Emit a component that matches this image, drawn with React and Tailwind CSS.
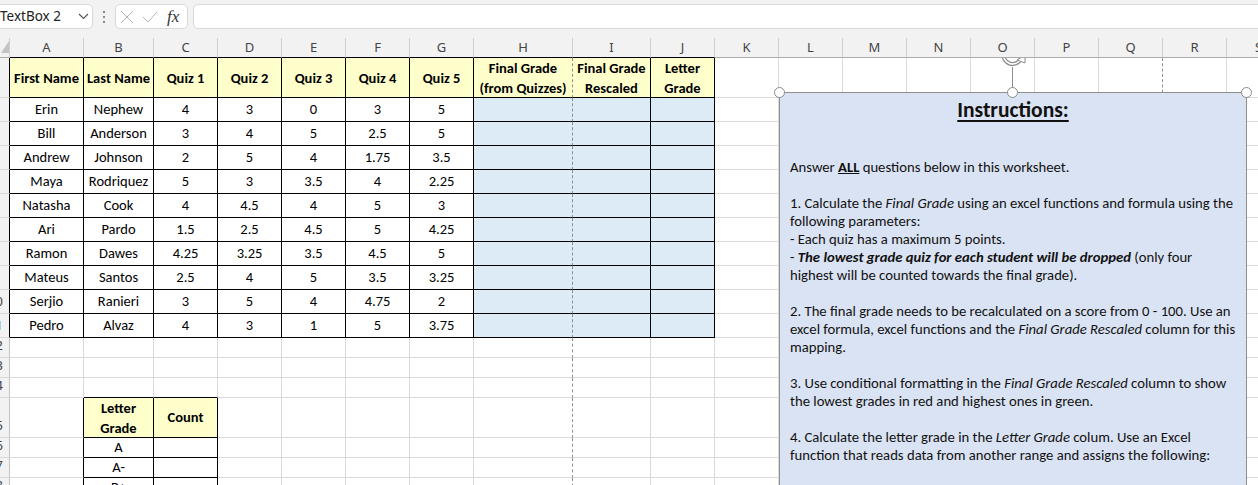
import React from 'react';

const COLS = ['A','B','C','D','E','F','G','H','I','J','K','L','M','N','O','P','Q','R','S'];

const DATA = [
  ['Erin','Nephew','4','3','0','3','5'],
  ['Bill','Anderson','3','4','5','2.5','5'],
  ['Andrew','Johnson','2','5','4','1.75','3.5'],
  ['Maya','Rodriquez','5','3','3.5','4','2.25'],
  ['Natasha','Cook','4','4.5','4','5','3'],
  ['Ari','Pardo','1.5','2.5','4.5','5','4.25'],
  ['Ramon','Dawes','4.25','3.25','3.5','4.5','5'],
  ['Mateus','Santos','2.5','4','5','3.5','3.25'],
  ['Serjio','Ranieri','3','5','4','4.75','2'],
  ['Pedro','Alvaz','4','3','1','5','3.75'],
];

const HEAD = [
  ['First Name'], ['Last Name'], ['Quiz 1'], ['Quiz 2'], ['Quiz 3'], ['Quiz 4'], ['Quiz 5'],
  ['Final Grade', '(from Quizzes)'], ['Final Grade', 'Rescaled'], ['Letter', 'Grade'],
];

const inT = (r, c) => (r >= 1 && r <= 11 && c >= 1 && c <= 10) || (r >= 15 && c >= 2 && c <= 3);

function rightCls(r, c) {
  if ((c === 8 || c === 17) && r >= 1) return 'border-r-[#8f8f8f] [border-right-style:dashed]';
  if (inT(r, c) || inT(r, c + 1)) return 'border-r-black';
  if (r === 0) return 'border-r-[#cfcfcf]';
  if (c === 0) return 'border-r-[#c4c4c4]';
  return 'border-r-[#dadada]';
}
function bottomCls(r, c) {
  if (inT(r, c) || inT(r + 1, c)) return 'border-b-black';
  if (r === 0) return 'border-b-[#ababab]';
  return 'border-b-[#dadada]';
}
function bgCls(r, c) {
  if (r === 0 || c === 0) return 'bg-[#f2f2f2]';
  if (r === 1 && c >= 1 && c <= 10) return 'bg-[#ffffcc]';
  if (r >= 2 && r <= 11 && c >= 8 && c <= 10) return 'bg-[#ddebf7]';
  if (r === 15 && (c === 2 || c === 3)) return 'bg-[#ffffcc]';
  return 'bg-white';
}

function content(r, c) {
  if (r === 0) {
    if (c === 0) {
      return (
        <svg width="10" height="20" className="block">
          <polygon points="1,18 9,18 9,6" fill="#c3c3c3" />
        </svg>
      );
    }
    return <span className="text-[13px] text-[#444] font-['Noto_Sans',sans-serif]">{COLS[c - 1]}</span>;
  }
  if (c === 0) {
    if (r >= 10) {
      return <span className="text-[13px] text-[#444] font-['Noto_Sans',sans-serif] ml-[-12px]">{String(r)}</span>;
    }
    return null;
  }
  if (r === 1 && c <= 10) {
    const h = HEAD[c - 1];
    return (
      <div className="font-bold text-center leading-[20px]">
        {h.map((t, i) => <div key={i}>{t}</div>)}
      </div>
    );
  }
  if (r >= 2 && r <= 11 && c <= 7) return <span>{DATA[r - 2][c - 1]}</span>;
  if (r === 15 && c === 2) return <div className="font-bold text-center leading-[20px]"><div>Letter</div><div>Grade</div></div>;
  if (r === 15 && c === 3) return <span className="font-bold">Count</span>;
  if (c === 2 && r === 16) return <span>A</span>;
  if (c === 2 && r === 17) return <span>A-</span>;
  if (c === 2 && r === 18) return <span>B+</span>;
  return null;
}

function Grid() {
  const cells = [];
  for (let r = 0; r <= 18; r++) {
    for (let c = 0; c <= 19; c++) {
      const align = c === 0 ? 'justify-start items-end pb-[2px]' : 'justify-center items-center';
      cells.push(
        <div
          key={r + '-' + c}
          className={`border-r border-b ${rightCls(r, c)} ${bottomCls(r, c)} ${bgCls(r, c)} flex ${align} overflow-hidden whitespace-nowrap`}
        >
          {content(r, c)}
        </div>
      );
    }
  }
  return (
    <div className="grid grid-cols-[10px_74px_70px_64px_64px_64px_64px_64px_99px_78px_64px_64px_64px_64px_64px_64px_64px_64px_64px_64px] grid-rows-[20px_40px_24px_24px_24px_24px_24px_24px_24px_24px_24px_24px_20px_20px_20px_40px_20px_20px_20px] text-[14.5px] text-black font-['Carlito','Lato',sans-serif]">
      {cells}
    </div>
  );
}

function TopBar() {
  return (
    <div className="h-[38px] bg-[#f2f2f2] flex items-start pt-[4px]">
      <div className="ml-[-6px] w-[99px] h-[25px] shrink-0 bg-white border border-[#d9d9d9] rounded-[5px] flex items-center justify-between pl-[5px] pr-[3px]">
        <span className="text-[13.5px] text-[#222] font-['Noto_Sans',sans-serif]">TextBox 2</span>
        <svg width="11" height="7" viewBox="0 0 11 7">
          <polyline points="1,1 5.5,5.5 10,1" fill="none" stroke="#555" strokeWidth="1.2" />
        </svg>
      </div>
      <div className="w-[22px] h-[25px] shrink-0 flex flex-col items-center justify-center gap-[3px]">
        <div className="w-[2px] h-[2px] bg-[#8a8a8a]" />
        <div className="w-[2px] h-[2px] bg-[#8a8a8a]" />
        <div className="w-[2px] h-[2px] bg-[#8a8a8a]" />
      </div>
      <div className="w-[73px] h-[25px] shrink-0 bg-white border border-[#d9d9d9] rounded-[5px] flex items-center pl-[4px]">
        <svg width="14" height="14" viewBox="0 0 14 14" className="shrink-0">
          <line x1="1" y1="1" x2="13" y2="13" stroke="#b3b3b3" strokeWidth="1" />
          <line x1="13" y1="1" x2="1" y2="13" stroke="#b3b3b3" strokeWidth="1" />
        </svg>
        <svg width="16" height="12" viewBox="0 0 16 12" className="ml-[8px] shrink-0">
          <polyline points="1,6 6,11 15,1" fill="none" stroke="#b3b3b3" strokeWidth="1" />
        </svg>
        <span className="ml-[9px] text-[17px] italic text-[#333] font-['Liberation_Serif',serif] leading-none">fx</span>
      </div>
      <div className="ml-[5px] w-[1080px] h-[25px] shrink-0 bg-white border border-[#d9d9d9] rounded-[5px]" />
    </div>
  );
}

function Handle({ className }) {
  return <div className={`absolute w-[11px] h-[11px] rounded-full bg-white border-[1.5px] border-[#8c8c8c] ${className}`} />;
}

function InstructionsBox() {
  return (
    <>
      <svg className="absolute left-[999px] top-[58px]" width="28" height="10" viewBox="0 0 28 10">
        <path d="M5 -6 A9 9 0 0 0 22 0" fill="none" stroke="#8c8c8c" strokeWidth="4" />
        <path d="M5 -6 A9 9 0 0 0 22 0" fill="none" stroke="#ffffff" strokeWidth="1.6" />
        <polygon points="18,2 26,-3 26,5" fill="#ffffff" stroke="#8c8c8c" strokeWidth="1" />
      </svg>
      <div className="absolute left-[1012px] top-[67px] w-[1px] h-[21px] bg-[#8c8c8c]" />
      <div className="absolute left-[779px] top-[92px] w-[468px] h-[420px] bg-[#dae3f3] border border-[#8f8f8f] px-[10px] pt-[5px] text-[14.7px] leading-[18px] text-[#111] font-['Carlito','Lato',sans-serif] whitespace-nowrap">
        <div className="text-center text-[21.5px] leading-[24px] font-bold underline underline-offset-[3px]">Instructions:</div>
        <div className="h-[36px]" />
        <div>Answer <span className="font-bold underline">ALL</span> questions below in this worksheet.</div>
        <div className="h-[18px]" />
        <div>1. Calculate the <i>Final Grade</i> using an excel functions and formula using the</div>
        <div>following parameters:</div>
        <div>- Each quiz has a maximum 5 points.</div>
        <div>- <b><i>The lowest grade quiz for each student will be dropped</i></b> (only four</div>
        <div>highest will be counted towards the final grade).</div>
        <div className="h-[18px]" />
        <div>2. The final grade needs to be recalculated on a score from 0 - 100. Use an</div>
        <div>excel formula, excel functions and the <i>Final Grade Rescaled</i> column for this</div>
        <div>mapping.</div>
        <div className="h-[18px]" />
        <div>3. Use conditional formatting in the <i>Final Grade Rescaled</i> column to show</div>
        <div>the lowest grades in red and highest ones in green.</div>
        <div className="h-[18px]" />
        <div>4. Calculate the letter grade in the <i>Letter Grade</i> colum. Use an Excel</div>
        <div>function that reads data from another range and assigns the following:</div>
      </div>
      <Handle className="left-[774px] top-[87px]" />
      <Handle className="left-[1007px] top-[87px]" />
      <Handle className="left-[1241px] top-[87px]" />
    </>
  );
}

export default function App() {
  return (
    <div className="relative w-[1258px] h-[485px] overflow-hidden bg-white">
      <TopBar />
      <Grid />
      <InstructionsBox />
    </div>
  );
}
